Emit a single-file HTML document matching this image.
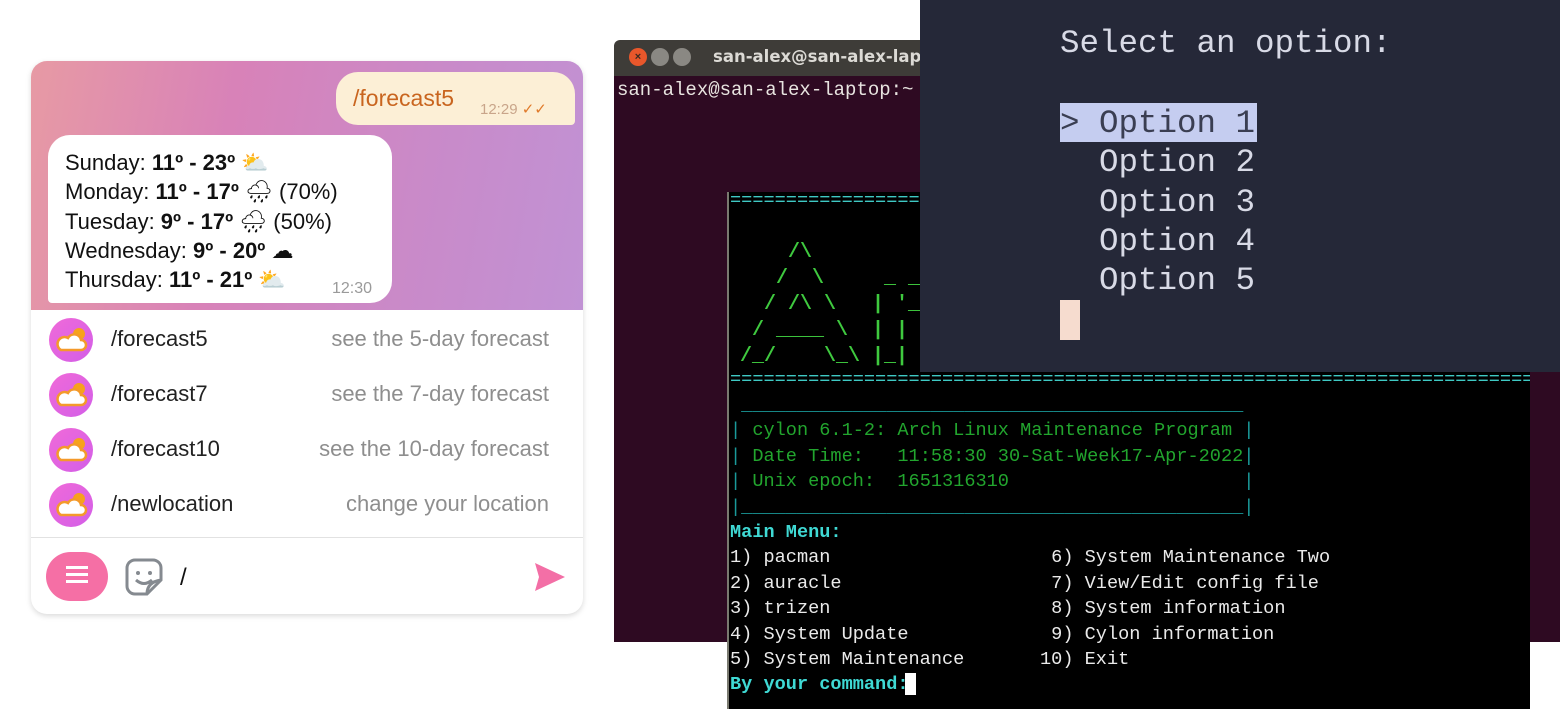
<!DOCTYPE html>
<html><head><meta charset="utf-8"><style>
*{margin:0;padding:0;box-sizing:border-box}
body{width:1560px;height:709px;background:#fff;position:relative;overflow:hidden;font-family:"Liberation Sans","DejaVu Sans",sans-serif}
.a{position:absolute;white-space:pre}
.card{position:absolute;left:31px;top:61px;width:552px;height:553px;border-radius:16px;background:#fff;overflow:hidden;box-shadow:0 2px 6px rgba(0,0,0,.15)}
.bg{position:absolute;left:0;top:0;width:552px;height:249px;background:linear-gradient(100deg,#e79aa4 0%,#d882b8 35%,#c98ac9 70%,#c192d4 100%)}
.mono{font-family:"Liberation Mono","DejaVu Sans Mono",monospace}
.row{position:absolute;left:0;width:552px;height:55px}
.ic{position:absolute;left:18px;top:6px;width:44px;height:44px;border-radius:50%;background:linear-gradient(135deg,#f06ad8,#d35ee8)}
.cmd{position:absolute;left:80px;top:14px;font-size:22px;color:#222}
.desc{position:absolute;right:34px;top:14px;font-size:22px;color:#8e8e8e}
.cy{font-size:18.6px;line-height:25.4px}
b.w{font-weight:bold}
</style></head><body>

<div class="card">
 <div class="bg"></div>
 <div class="a" style="left:305px;top:11px;width:239px;height:53px;background:#fcefd6;border-radius:22px 22px 4px 22px"></div>
 <div class="a" style="left:322px;top:24px;font-size:23px;color:#c9651f">/forecast5</div>
 <div class="a" style="left:449px;top:39px;font-size:15px;color:#c9a58a">12:29 <span style="color:#e07a2a">✓✓</span></div>
 <div class="a" style="left:17px;top:74px;width:344px;height:168px;background:#fff;border-radius:22px 22px 22px 4px"></div>
 <div class="a" style="left:34px;top:87px;font-size:22px;line-height:29.3px;color:#111">Sunday: <b class="w">11º - 23º</b> ⛅
Monday: <b class="w">11º - 17º</b> 🌧 (70%)
Tuesday: <b class="w">9º - 17º</b> 🌧 (50%)
Wednesday: <b class="w">9º - 20º</b> ☁
Thursday: <b class="w">11º - 21º</b> ⛅</div>
 <div class="a" style="left:301px;top:219px;font-size:16px;color:#9a9a9a">12:30</div>

 <div class="row" style="top:251px"><div class="ic"></div><svg class="a" style="left:24px;top:12px" width="34" height="32" viewBox="0 0 34 32"><circle cx="24" cy="10" r="6" fill="#f7a21b"/><path d="M6 26h20a5 5 0 0 0 0-10 7 7 0 0 0-13-2 6 6 0 0 0-7 12z" fill="#fff" stroke="#f49a2a" stroke-width="2.5"/></svg><div class="cmd">/forecast5</div><div class="desc">see the 5-day forecast</div></div>
 <div class="row" style="top:306px"><div class="ic"></div><svg class="a" style="left:24px;top:12px" width="34" height="32" viewBox="0 0 34 32"><circle cx="24" cy="10" r="6" fill="#f7a21b"/><path d="M6 26h20a5 5 0 0 0 0-10 7 7 0 0 0-13-2 6 6 0 0 0-7 12z" fill="#fff" stroke="#f49a2a" stroke-width="2.5"/></svg><div class="cmd">/forecast7</div><div class="desc">see the 7-day forecast</div></div>
 <div class="row" style="top:361px"><div class="ic"></div><svg class="a" style="left:24px;top:12px" width="34" height="32" viewBox="0 0 34 32"><circle cx="24" cy="10" r="6" fill="#f7a21b"/><path d="M6 26h20a5 5 0 0 0 0-10 7 7 0 0 0-13-2 6 6 0 0 0-7 12z" fill="#fff" stroke="#f49a2a" stroke-width="2.5"/></svg><div class="cmd">/forecast10</div><div class="desc">see the 10-day forecast</div></div>
 <div class="row" style="top:416px"><div class="ic"></div><svg class="a" style="left:24px;top:12px" width="34" height="32" viewBox="0 0 34 32"><circle cx="24" cy="10" r="6" fill="#f7a21b"/><path d="M6 26h20a5 5 0 0 0 0-10 7 7 0 0 0-13-2 6 6 0 0 0-7 12z" fill="#fff" stroke="#f49a2a" stroke-width="2.5"/></svg><div class="cmd">/newlocation</div><div class="desc">change your location</div></div>

 <div class="a" style="left:0;top:476px;width:552px;height:1px;background:#e2e2e2"></div>
 <div class="a" style="left:15px;top:491px;width:62px;height:49px;border-radius:25px;background:#f56fa5"></div>
 <div class="a" style="left:35px;top:505px;width:22px;height:3px;background:#fff;box-shadow:0 7px 0 #fff,0 14px 0 #fff"></div>
 <svg class="a" style="left:94px;top:497px" width="38" height="38" viewBox="0 0 38 38"><path d="M10 2h18a8 8 0 0 1 8 8v12L22 36H10a8 8 0 0 1-8-8V10a8 8 0 0 1 8-8z" fill="none" stroke="#858a90" stroke-width="3"/><circle cx="13" cy="15" r="2" fill="#858a90"/><circle cx="25" cy="15" r="2" fill="#858a90"/><path d="M11 22q8 7 16 0M22 36q0-12 14-14" fill="none" stroke="#858a90" stroke-width="3"/></svg>
 <div class="a" style="left:149px;top:503px;font-size:24px;color:#111">/</div>
 <svg class="a" style="left:502px;top:500px" width="34" height="32" viewBox="0 0 34 32"><path d="M2 2L32 16 2 30 6 16z" fill="#f36fa6"/></svg>
</div>

<div class="a" style="left:614px;top:40px;width:946px;height:36px;background:#3e3c38;border-radius:6px 6px 0 0"></div>
<div class="a" style="left:629px;top:48px;width:18px;height:18px;border-radius:50%;background:#e9572b;color:#3e2a20;font-size:11px;text-align:center;line-height:18px;font-weight:bold">×</div>
<div class="a" style="left:651px;top:48px;width:18px;height:18px;border-radius:50%;background:#8a8883"></div>
<div class="a" style="left:673px;top:48px;width:18px;height:18px;border-radius:50%;background:#8a8883"></div>
<div class="a" style="left:713px;top:47px;font-size:16.5px;font-weight:bold;color:#dcdad5;font-family:'DejaVu Sans',sans-serif">san-alex@san-alex-laptop</div>
<div class="a" style="left:614px;top:76px;width:946px;height:566px;background:#2e0a22"></div>
<div class="a mono" style="left:617px;top:79px;font-size:19px;color:#e8e4e0">san-alex@san-alex-laptop:~</div>

<div class="a" style="left:727px;top:192px;width:803px;height:517px;background:#000;border-left:2px solid #7a7a70"></div>
<div class="a mono cy" style="left:730px;top:188px;color:#3fc9c4">========================================================================</div>
<div class="a mono" style="left:740px;top:240px;font-size:20px;line-height:26px;color:#3fc93f;font-weight:bold">    /\
   /  \     _ __
  / /\ \   | '__
 / ____ \  | |
/_/    \_\ |_|</div>
<div class="a mono cy" style="left:730px;top:367px;color:#3fc9c4;width:800px;overflow:hidden">========================================================================</div>
<div class="a mono cy" style="left:730px;top:393px;color:#1a9a9a"> _____________________________________________
<span style="color:#1a9a9a">|</span><span style="color:#22a52e"> cylon 6.1-2: Arch Linux Maintenance Program </span>|
|<span style="color:#22a52e"> Date Time:   11:58:30 30-Sat-Week17-Apr-2022</span>|
|<span style="color:#22a52e"> Unix epoch:  1651316310</span>                     |
|_____________________________________________|</div>
<div class="a mono cy" style="left:730px;top:520px;color:#eaeaea"><b style="color:#3fd9d4">Main Menu:</b>
1) pacman
2) auracle
3) trizen
4) System Update
5) System Maintenance
<b style="color:#3fd9d4">By your command:</b></div>
<div class="a" style="left:905px;top:673px;width:11px;height:22px;background:#fff"></div>
<div class="a mono cy" style="left:1040px;top:545.4px;color:#eaeaea"> 6) System Maintenance Two
 7) View/Edit config file
 8) System information
 9) Cylon information
10) Exit</div>

<div class="a" style="left:920px;top:0;width:640px;height:372px;background:#252838"></div>
<div class="a mono" style="left:1060px;top:25px;font-size:32.5px;color:#d8dae6">Select an option:</div>
<div class="a" style="left:1060px;top:103px;width:197px;height:39px;background:#c5cdf0"></div>
<div class="a mono" style="left:1060px;top:104px;font-size:32.5px;line-height:39.3px;color:#d8dae6"><span style="color:#3a3e52">&gt; Option 1</span>
  Option 2
  Option 3
  Option 4
  Option 5</div>
<div class="a" style="left:1060px;top:300px;width:20px;height:40px;background:#f6dccf"></div>
</body></html>
